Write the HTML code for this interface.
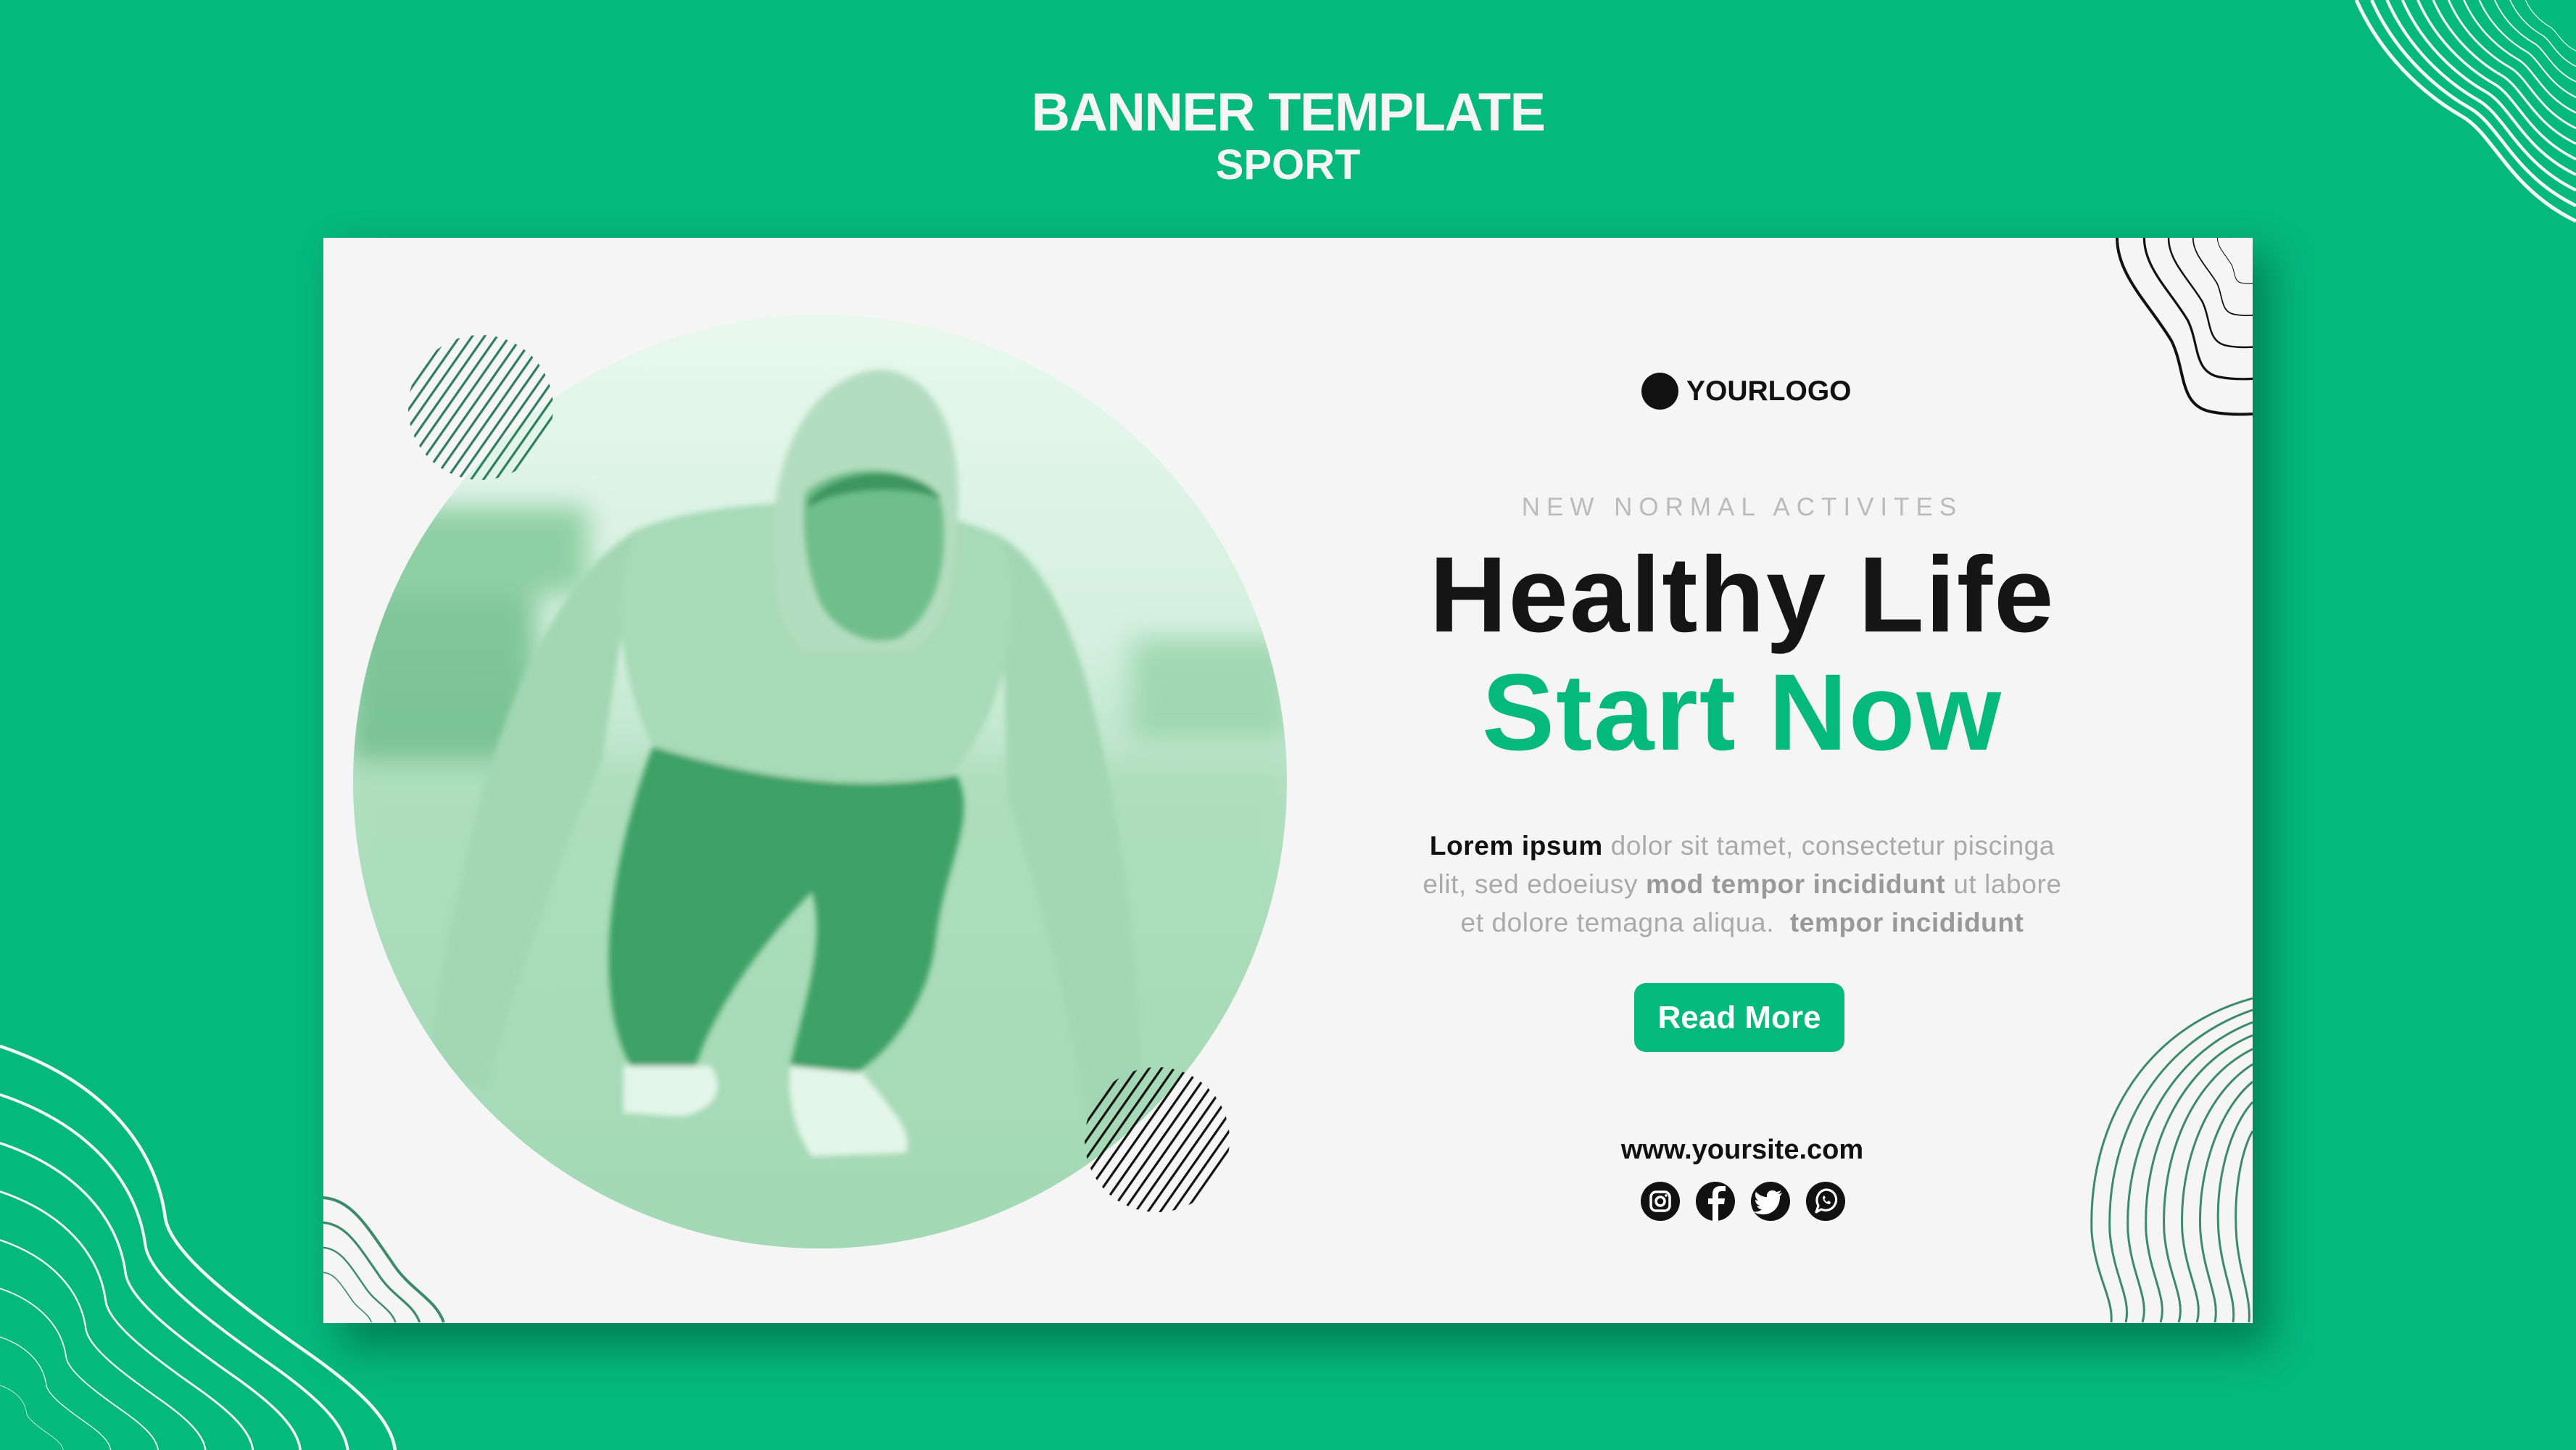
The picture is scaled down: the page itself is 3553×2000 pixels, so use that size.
<!DOCTYPE html>
<html><head><meta charset="utf-8">
<style>
html,body{margin:0;padding:0}
body{width:3553px;height:2000px;background:#05b87c;position:relative;overflow:hidden;font-family:"Liberation Sans",sans-serif}
.abs{position:absolute}
.t1{left:0;width:3553px;text-align:center;top:112px;font-size:74px;font-weight:bold;color:#f5f5f5;letter-spacing:-1.5px}
.t2{left:0;width:3553px;text-align:center;top:194px;font-size:58px;font-weight:bold;color:#f5f5f5}
.col{left:1903px;width:1000px;text-align:center}
.logo{top:514px;left:2264px;width:51px;height:51px;border-radius:50%;background:#111}
.logot{top:518px;left:2326px;font-size:39px;font-weight:bold;color:#111;letter-spacing:0}
.sub{top:680px;font-size:35px;color:#bbb;letter-spacing:9px}
.h1{top:736px;font-size:148px;font-weight:bold;color:#151515;letter-spacing:2px;line-height:170px}
.h2{top:897px;font-size:150px;font-weight:bold;color:#05b87c;letter-spacing:2px;line-height:170px}
.p{top:1140px;font-size:37px;line-height:53px;color:#aaa;white-space:nowrap;letter-spacing:0.6px}
.p b{color:#111}
.p .m{color:#999;font-weight:bold}
.btn{left:2254px;top:1356px;width:290px;height:95px;border-radius:16px;background:#05b87c;color:#fff;font-size:44px;font-weight:bold;text-align:center;line-height:95px}
.site{top:1565px;font-size:38px;font-weight:bold;color:#111}
</style></head><body>
<svg class="abs" style="left:0;top:0" width="3553" height="2000" viewBox="0 0 3553 2000">
<defs>
<filter id="sh" x="-10%" y="-10%" width="130%" height="130%"><feGaussianBlur stdDeviation="28"/></filter>
<filter id="bl" x="-20%" y="-20%" width="140%" height="140%"><feGaussianBlur stdDeviation="18"/></filter>
<filter id="bl2"><feGaussianBlur stdDeviation="4"/></filter>
<clipPath id="card"><rect x="446" y="328" width="2661" height="1497"/></clipPath>
<clipPath id="circ"><circle cx="1131" cy="1078" r="644"/></clipPath>
<pattern id="hg" width="14" height="14" patternUnits="userSpaceOnUse" patternTransform="rotate(35)"><rect x="0" y="0" width="3.2" height="14" fill="#2e7d62"/></pattern>
<pattern id="hb" width="14" height="14" patternUnits="userSpaceOnUse" patternTransform="rotate(35)"><rect x="0" y="0" width="3.2" height="14" fill="#111"/></pattern>
<linearGradient id="bg" x1="0" y1="0" x2="0" y2="1"><stop offset="0" stop-color="#e9f8ee"/><stop offset="0.35" stop-color="#d4f0de"/><stop offset="0.5" stop-color="#b9e3c7"/><stop offset="1" stop-color="#9ed6b1"/></linearGradient>
<path id="tr" d="M3250,0 C3290,90 3360,140 3395,160 C3440,185 3460,260 3553,305" fill="none" stroke="#f4fbf7" stroke-width="5"/>
<path id="bL" d="M0,1443 C140,1490 215,1580 228,1680 C236,1730 330,1800 430,1870 C500,1920 540,1960 545,2000" fill="none" stroke="#f4fbf7" stroke-width="4.5"/>
<path id="cbl" d="M446,1652 C485,1655 505,1690 540,1740 C565,1780 600,1790 612,1824" fill="none" stroke="#3b8a6c" stroke-width="4"/>
<path id="ctr" d="M2920,328 C2920,380 2965,420 2995,470 C3015,510 3005,560 3050,568 C3070,572 3090,572 3107,571" fill="none" stroke="#111" stroke-width="4"/>
</defs>
<g>
<use href="#tr"/>
<use href="#tr" transform="translate(3553,0) scale(.93) translate(-3553,0)"/>
<use href="#tr" transform="translate(3553,0) scale(.86) translate(-3553,0)"/>
<use href="#tr" transform="translate(3553,0) scale(.79) translate(-3553,0)"/>
<use href="#tr" transform="translate(3553,0) scale(.72) translate(-3553,0)"/>
<use href="#tr" transform="translate(3553,0) scale(.65) translate(-3553,0)"/>
<use href="#tr" transform="translate(3553,0) scale(.58) translate(-3553,0)"/>
<use href="#tr" transform="translate(3553,0) scale(.51) translate(-3553,0)"/>
<use href="#tr" transform="translate(3553,0) scale(.44) translate(-3553,0)"/>
<use href="#tr" transform="translate(3553,0) scale(.37) translate(-3553,0)"/>
<use href="#tr" transform="translate(3553,0) scale(.30) translate(-3553,0)"/>
<use href="#tr" transform="translate(3553,0) scale(.23) translate(-3553,0)"/>
</g>
<g>
<use href="#bL"/>
<use href="#bL" transform="translate(0,2000) scale(.88) translate(0,-2000)"/>
<use href="#bL" transform="translate(0,2000) scale(.76) translate(0,-2000)"/>
<use href="#bL" transform="translate(0,2000) scale(.64) translate(0,-2000)"/>
<use href="#bL" transform="translate(0,2000) scale(.52) translate(0,-2000)"/>
<use href="#bL" transform="translate(0,2000) scale(.40) translate(0,-2000)"/>
<use href="#bL" transform="translate(0,2000) scale(.28) translate(0,-2000)"/>
<use href="#bL" transform="translate(0,2000) scale(.16) translate(0,-2000)"/>
</g>
<rect x="470" y="350" width="2661" height="1510" fill="#02704a" opacity=".75" filter="url(#sh)"/>
<rect x="446" y="328" width="2661" height="1497" fill="#f5f5f5"/>
<g clip-path="url(#card)">
<use href="#cbl"/>
<use href="#cbl" transform="translate(446,1824) scale(.8) translate(-446,-1824)"/>
<use href="#cbl" transform="translate(446,1824) scale(.6) translate(-446,-1824)"/>
<use href="#cbl" transform="translate(446,1824) scale(.4) translate(-446,-1824)"/>
<use href="#ctr"/>
<use href="#ctr" transform="translate(3107,328) scale(.8) translate(-3107,-328)"/>
<use href="#ctr" transform="translate(3107,328) scale(.62) translate(-3107,-328)"/>
<use href="#ctr" transform="translate(3107,328) scale(.44) translate(-3107,-328)"/>
<use href="#ctr" transform="translate(3107,328) scale(.26) translate(-3107,-328)"/>
<g fill="none" stroke="#3b8a6c" stroke-width="3">
<path d="M3107,1377 C2950,1420 2880,1560 2885,1700 C2890,1760 2915,1790 2912,1824"/>
<path d="M3107,1393 C2970,1440 2905,1570 2910,1700 C2915,1760 2940,1790 2932,1824"/>
<path d="M3107,1410 C2990,1455 2930,1580 2935,1700 C2940,1760 2965,1790 2955,1824"/>
<path d="M3107,1428 C3005,1470 2955,1590 2960,1700 C2965,1760 2990,1790 2980,1824"/>
<path d="M3107,1447 C3020,1490 2980,1600 2985,1700 C2990,1760 3015,1790 3005,1824"/>
<path d="M3107,1468 C3040,1510 3005,1610 3010,1700 C3015,1760 3040,1790 3030,1824"/>
<path d="M3107,1492 C3060,1530 3030,1620 3035,1700 C3040,1760 3062,1790 3055,1824"/>
<path d="M3107,1520 C3075,1555 3055,1630 3060,1700 C3065,1760 3085,1790 3080,1824"/>
<path d="M3107,1560 C3090,1590 3080,1650 3085,1710 C3090,1760 3105,1790 3102,1824"/>
</g>
</g>
<g clip-path="url(#circ)">
<rect x="480" y="430" width="1300" height="1300" fill="url(#bg)"/>
<g filter="url(#bl)">
<rect x="480" y="700" width="330" height="120" fill="#8fcfa4"/>
<rect x="480" y="820" width="260" height="230" fill="#5cb37c" opacity=".7"/>
<rect x="1560" y="880" width="220" height="140" fill="#8fcfa4" opacity=".7"/>
<rect x="480" y="1050" width="1300" height="700" fill="#a6dab7" opacity=".6"/>
</g>
<g filter="url(#bl2)">
<path d="M880,730 C760,800 680,1000 640,1200 C610,1330 590,1420 600,1490 L670,1500 C700,1400 760,1200 830,1050 Z" fill="#a2d6b3"/>
<path d="M1380,740 C1480,800 1520,1000 1550,1200 C1570,1350 1575,1450 1570,1530 L1500,1540 C1480,1420 1440,1250 1390,1100 Z" fill="#a2d6b3"/>
<path d="M880,730 C1000,680 1260,680 1380,740 C1420,820 1390,980 1310,1070 C1150,1110 1000,1080 900,1030 C850,920 840,800 880,730 Z" fill="#a8d9b8"/>
<path d="M900,1030 C1000,1060 1150,1100 1320,1070 C1350,1130 1300,1200 1290,1300 C1280,1380 1230,1450 1180,1480 L1090,1470 C1110,1380 1140,1300 1120,1230 C1050,1300 980,1400 960,1470 L870,1470 C830,1400 820,1250 900,1030 Z" fill="#3da065"/>
<path d="M860,1470 L980,1470 C1000,1500 990,1530 940,1540 L860,1535 Z" fill="#e4f5ea"/>
<path d="M1090,1470 L1190,1480 C1230,1530 1260,1560 1250,1590 L1120,1595 C1095,1560 1085,1510 1090,1470 Z" fill="#e4f5ea"/>
<path d="M1070,800 C1050,650 1110,520 1210,510 C1300,510 1330,620 1320,720 C1320,820 1300,880 1250,900 L1110,900 C1080,870 1070,840 1070,800 Z" fill="#b2ddc0"/>
<path d="M1110,680 C1160,630 1280,640 1300,700 C1310,780 1290,850 1240,880 C1200,895 1150,870 1130,830 C1110,780 1105,720 1110,680 Z" fill="#6fbf8a"/>
<path d="M1115,690 C1160,640 1270,640 1300,690 C1260,670 1160,670 1115,700 Z" fill="#3d955f"/>
</g>
</g>
<circle cx="663" cy="562" r="100" fill="url(#hg)"/>
<circle cx="1596" cy="1572" r="100" fill="url(#hb)"/>
<g>
<circle cx="2290" cy="1657" r="27" fill="#111"/>
<rect x="2277" y="1644" width="26" height="26" rx="7" fill="none" stroke="#fff" stroke-width="3.5"/>
<circle cx="2290" cy="1657" r="6" fill="none" stroke="#fff" stroke-width="3.5"/>
<circle cx="2298" cy="1649" r="1.8" fill="#fff"/>
<circle cx="2366" cy="1657" r="27" fill="#111"/>
<path d="M2370,1684 L2370,1661 L2378,1661 L2379,1653 L2370,1653 L2370,1647 C2370,1644 2372,1643 2375,1643 L2380,1643 L2380,1636 L2373,1636 C2366,1636 2362,1640 2362,1647 L2362,1653 L2356,1653 L2356,1661 L2362,1661 L2362,1684 Z" fill="#fff"/>
<circle cx="2442" cy="1657" r="27" fill="#111"/>
<path d="M2458,1645 C2456,1646 2454,1647 2452,1647 C2454,1646 2456,1644 2456,1642 C2454,1643 2452,1644 2450,1644 C2446,1640 2438,1642 2437,1648 L2437,1651 C2431,1651 2426,1648 2422,1644 C2420,1648 2421,1653 2425,1656 C2423,1656 2422,1655 2421,1655 C2421,1659 2424,1662 2427,1663 C2426,1664 2424,1664 2423,1663 C2424,1666 2427,1668 2430,1668 C2427,1671 2422,1672 2418,1671 C2422,1674 2427,1675 2432,1675 C2447,1675 2455,1663 2455,1651 L2455,1650 C2456,1649 2457,1647 2458,1645 Z" fill="#fff"/>
<circle cx="2518" cy="1657" r="27" fill="#111"/>
<path d="M2505,1672 L2508,1663 C2502,1653 2510,1640 2520,1641 C2531,1642 2536,1654 2530,1663 C2526,1669 2518,1671 2512,1668 Z" fill="none" stroke="#fff" stroke-width="3.2" stroke-linejoin="round"/>
<path d="M2514,1651 C2514,1656 2518,1661 2524,1661 L2525,1658 L2522,1656 L2520,1658 C2518,1657 2517,1655 2516,1654 L2518,1652 L2516,1649 Z" fill="#fff"/>
</g>
</svg>
<div class="abs t1">BANNER TEMPLATE</div>
<div class="abs t2">SPORT</div>
<div class="abs logo"></div>
<div class="abs logot">YOURLOGO</div>
<div class="abs col sub">NEW NORMAL ACTIVITES</div>
<div class="abs col h1">Healthy Life</div>
<div class="abs col h2">Start Now</div>
<div class="abs col p"><b>Lorem ipsum</b> dolor sit tamet, consectetur piscinga<br>elit, sed edoeiusy <span class="m">mod tempor incididunt</span> ut labore<br>et dolore temagna aliqua.&nbsp; <span class="m">tempor incididunt</span></div>
<div class="abs btn">Read More</div>
<div class="abs col site">www.yoursite.com</div>
</body></html>
